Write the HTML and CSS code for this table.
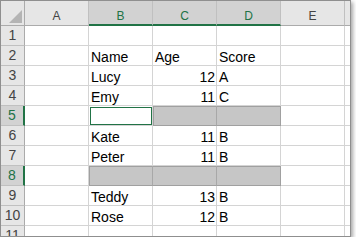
FILE: index.html
```html
<!DOCTYPE html>
<html lang="en">
<head>
    <meta charset="UTF-8">
    <title>Sheet</title>
    <link rel="stylesheet" href="styles.css">
</head>
<body>
    <div class="sheet">
        <!-- header row -->
        <div class="corner"><svg width="13" height="13" viewBox="0 0 13 13"><polygon points="13,0 13,13 0,13" fill="#b4b4b4"/></svg></div>
        <div class="col-head">A</div>
        <div class="col-head sel">B</div>
        <div class="col-head sel">C</div>
        <div class="col-head sel">D</div>
        <div class="col-head">E</div>
        <div class="col-head edge"></div>

        <div class="row-head">1</div>
        <div class="cell"></div><div class="cell"></div><div class="cell"></div><div class="cell"></div><div class="cell"></div><div class="cell edge"></div>

        <div class="row-head">2</div>
        <div class="cell"></div><div class="cell">Name</div><div class="cell">Age</div><div class="cell">Score</div><div class="cell"></div><div class="cell edge"></div>

        <div class="row-head">3</div>
        <div class="cell"></div><div class="cell">Lucy</div><div class="cell num">12</div><div class="cell">A</div><div class="cell"></div><div class="cell edge"></div>

        <div class="row-head">4</div>
        <div class="cell"></div><div class="cell">Emy</div><div class="cell num">11</div><div class="cell">C</div><div class="cell"></div><div class="cell edge"></div>

        <div class="row-head sel">5</div>
        <div class="cell"></div><div class="cell active"></div><div class="cell hl first"></div><div class="cell hl last"></div><div class="cell"></div><div class="cell edge"></div>

        <div class="row-head">6</div>
        <div class="cell"></div><div class="cell">Kate</div><div class="cell num">11</div><div class="cell">B</div><div class="cell"></div><div class="cell edge"></div>

        <div class="row-head">7</div>
        <div class="cell"></div><div class="cell">Peter</div><div class="cell num">11</div><div class="cell">B</div><div class="cell"></div><div class="cell edge"></div>

        <div class="row-head sel">8</div>
        <div class="cell"></div><div class="cell hl first"></div><div class="cell hl"></div><div class="cell hl last"></div><div class="cell"></div><div class="cell edge"></div>

        <div class="row-head">9</div>
        <div class="cell"></div><div class="cell">Teddy</div><div class="cell num">13</div><div class="cell">B</div><div class="cell"></div><div class="cell edge"></div>

        <div class="row-head">10</div>
        <div class="cell"></div><div class="cell">Rose</div><div class="cell num">12</div><div class="cell">B</div><div class="cell"></div><div class="cell edge"></div>

        <div class="row-head cut">11</div>
        <div class="cell cut"></div><div class="cell cut"></div><div class="cell cut"></div><div class="cell cut"></div><div class="cell cut"></div><div class="cell edge cut"></div>
    </div>
</body>
</html>
```

FILE: styles.css
```css
:root {
    --grid: #d4d4d4;
    --head-bg: #e6e6e6;
    --head-sel: #d2d2d2;
    --head-line: #c0c0c0;
    --green: #217346;
}

* {
    box-sizing: border-box;
    margin: 0;
    padding: 0;
}

body {
    background: #fff;
    font-family: 'Liberation Sans', Arial, sans-serif;
}

.sheet {
    width: 351px;
    height: 237px;
    border: 1px solid #8f8f8f;
    box-shadow: 2px 2px 4px rgba(0, 0, 0, 0.35);
    display: grid;
    grid-template-columns: 24px repeat(5, 64px) 5px;
    grid-template-rows: 25px repeat(10, 20px) 10px;
    overflow: hidden;
    background: #fff;
}

.corner {
    background: var(--head-bg);
    border-right: 1px solid #ababab;
    border-bottom: 1px solid #ababab;
    display: flex;
    justify-content: flex-end;
    align-items: flex-end;
    padding: 0 2px 2px 0;
}

.col-head {
    background: var(--head-bg);
    border-right: 1px solid var(--head-line);
    border-bottom: 1px solid #ababab;
    color: #444;
    font-size: 12px;
    text-align: center;
    padding-top: 9px;
    line-height: 12px;
}

.col-head.sel {
    background: var(--head-sel);
    color: var(--green);
    border-bottom: 2px solid var(--green);
}

.col-head.edge {
    border-right: none;
}

.row-head {
    background: var(--head-bg);
    border-right: 1px solid #ababab;
    border-bottom: 1px solid var(--head-line);
    color: #444;
    font-size: 14px;
    text-align: center;
    line-height: 19px;
}

.row-head.sel {
    background: var(--head-sel);
    color: var(--green);
    border-right: 2px solid var(--green);
}

.cell {
    border-right: 1px solid var(--grid);
    border-bottom: 1px solid var(--grid);
    font-size: 14px;
    line-height: 16px;
    color: #000;
    padding: 0 2px;
    display: flex;
    align-items: flex-end;
    white-space: nowrap;
}

.cell.num {
    justify-content: flex-end;
    padding-right: 1px;
}

.cell.edge {
    border-right: none;
}

.cut {
    border-bottom: none;
}

.cell.active {
    position: relative;
}

.cell.active::after {
    content: "";
    position: absolute;
    top: 1px;
    left: 1px;
    right: 0;
    bottom: 0;
    border: 1px solid var(--green);
}

.cell.hl {
    background: #c6c6c6;
    border-right-color: #a8a8a8;
    border-bottom-color: #a0a0a0;
    box-shadow: inset 0 1px #a0a0a0;
}

.cell.hl.first {
    box-shadow: inset 0 1px #a0a0a0, inset 1px 0 #a0a0a0;
}

.cell.hl.last {
    border-right-color: #a0a0a0;
}
```
